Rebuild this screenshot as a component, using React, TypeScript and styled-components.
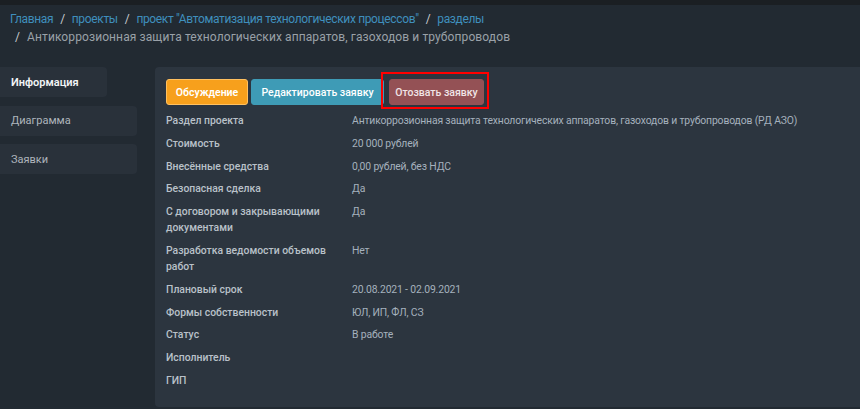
import React from "react";
import styled, { createGlobalStyle } from "styled-components";

const Global = createGlobalStyle`
  html, body { margin: 0; padding: 0; background: #222a32; }
  body { font-family: Roboto, "Noto Sans", sans-serif; }
  * { box-sizing: border-box; }
`;

const Page = styled.div`
  width: 860px;
  height: 409px;
  background: #222a32;
  display: flex;
  flex-direction: column;
  overflow: hidden;
`;

const TopStrip = styled.div`
  height: 5px;
  background: #1b1f23;
  flex: none;
`;

const Breadcrumbs = styled.div`
  padding: 5px 10px 0 10px;
  font-size: 12px;
  line-height: 18px;
  color: #9aa1a8;
  height: 62px;
  flex: none;
`;

const CrumbLine = styled.div<{ $ls: number }>`
  letter-spacing: ${(p) => p.$ls}px;
  white-space: nowrap;
`;

const Crumb = styled.a`
  color: #3f8fbd;
  text-decoration: none;
`;

const Sep = styled.span`
  color: #c9ccd0;
  margin: 0 7px;
`;

const Sep2 = styled.span`
  color: #c9ccd0;
  margin: 0 7px 0 5px;
`;

const Body = styled.div`
  display: flex;
  flex: 1;
  gap: 18px;
  align-items: flex-start;
`;

const Sidebar = styled.div`
  width: 137px;
  flex: none;
  display: flex;
  flex-direction: column;
  gap: 8.5px;
`;

const Tab = styled.div<{ $active?: boolean; $w: number }>`
  width: ${(p) => p.$w}px;
  height: 30px;
  background: #29313a;
  border-radius: 0 4px 4px 0;
  display: flex;
  align-items: center;
  padding-left: 11px;
  font-size: 11px;
  color: ${(p) => (p.$active ? "#f2f4f6" : "#aeb5bc")};
  font-weight: ${(p) => (p.$active ? 600 : 400)};
`;

const Panel = styled.div`
  flex: 1;
  height: 340px;
  background: #2c353f;
  border-radius: 4px 0 0 4px;
  padding: 12px 11px;
`;

const Buttons = styled.div`
  display: flex;
  align-items: center;
  margin-bottom: 8px;
`;

const Btn = styled.div<{ $bg: string; $border: string; $w: number; $ml: number; $bold?: boolean; $fg?: string }>`
  width: ${(p) => p.$w}px;
  margin-left: ${(p) => p.$ml}px;
  height: 26px;
  display: flex;
  align-items: center;
  justify-content: center;
  background: ${(p) => p.$bg};
  border: 1px solid ${(p) => p.$border};
  border-radius: 3px;
  font-size: 10.5px;
  color: ${(p) => p.$fg ?? "#ffffff"};
  font-weight: ${(p) => (p.$bold ? 600 : 500)};
  white-space: nowrap;
`;

const Highlighted = styled.div`
  position: relative;
  &::after {
    content: "";
    position: absolute;
    left: -3px;
    right: -5px;
    top: -7px;
    bottom: -4px;
    border: 2px solid #ff0000;
    pointer-events: none;
  }
`;

const Table = styled.div`
  display: grid;
  grid-template-columns: 186px 1fr;
  row-gap: 6.8px;
  font-size: 10.4px;
  line-height: 16px;
`;

const Label = styled.div`
  color: #b9c1c9;
  font-weight: 500;
  padding-right: 10px;
`;

const Value = styled.div`
  color: #a5b1bd;
  letter-spacing: -0.15px;
`;

const rows: [string, string][] = [
  ["Раздел проекта", "Антикоррозионная защита технологических аппаратов, газоходов и трубопроводов (РД АЗО)"],
  ["Стоимость", "20 000 рублей"],
  ["Внесённые средства", "0,00 рублей, без НДС"],
  ["Безопасная сделка", "Да"],
  ["С договором и закрывающими документами", "Да"],
  ["Разработка ведомости объемов работ", "Нет"],
  ["Плановый срок", "20.08.2021 - 02.09.2021"],
  ["Формы собственности", "ЮЛ, ИП, ФЛ, СЗ"],
  ["Статус", "В работе"],
  ["Исполнитель", ""],
  ["ГИП", ""],
];

export default function App() {
  return (
    <Page>
      <Global />
      <TopStrip />
      <Breadcrumbs>
        <CrumbLine $ls={-0.35}>
          <Crumb>Главная</Crumb>
          <Sep>/</Sep>
          <Crumb>проекты</Crumb>
          <Sep>/</Sep>
          <Crumb>проект "Автоматизация технологических процессов"</Crumb>
          <Sep>/</Sep>
          <Crumb>разделы</Crumb>
        </CrumbLine>
        <CrumbLine $ls={0.1}>
          <Sep2>/</Sep2>
          Антикоррозионная защита технологических аппаратов, газоходов и трубопроводов
        </CrumbLine>
      </Breadcrumbs>
      <Body>
        <Sidebar>
          <Tab $active $w={107}>Информация</Tab>
          <Tab $w={137}>Диаграмма</Tab>
          <Tab $w={137}>Заявки</Tab>
        </Sidebar>
        <Panel>
          <Buttons>
            <Btn $bg="#f7a01c" $border="#ffc060" $w={82} $ml={0} $bold>Обсуждение</Btn>
            <Btn $bg="#3e9bb6" $border="#3e9bb6" $w={133} $ml={3}>Редактировать заявку</Btn>
            <Highlighted>
              <Btn $bg="#945155" $border="#945155" $w={95} $ml={5} $fg="#f0e4e6">Отозвать заявку</Btn>
            </Highlighted>
          </Buttons>
          <Table>
            {rows.map(([l, v]) => (
              <React.Fragment key={l}>
                <Label>{l}</Label>
                <Value>{v}</Value>
              </React.Fragment>
            ))}
          </Table>
        </Panel>
      </Body>
    </Page>
  );
}
